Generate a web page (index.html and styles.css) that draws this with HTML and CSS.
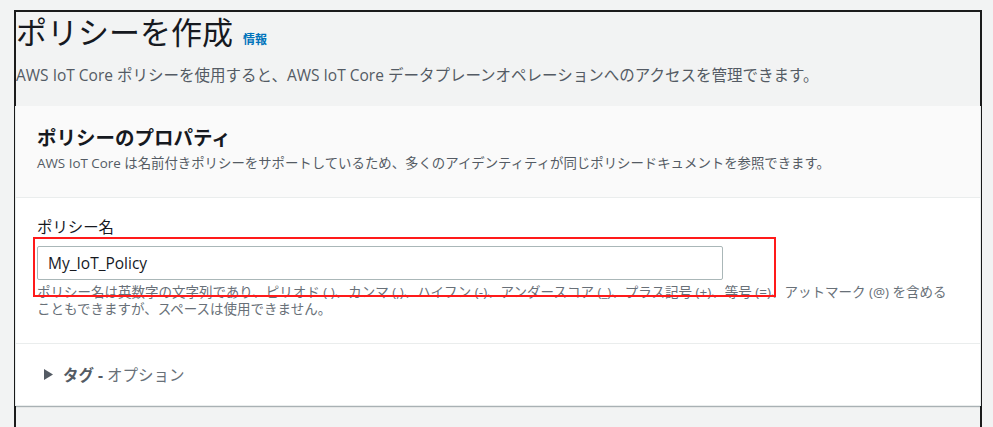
FILE: index.html
```html
<!DOCTYPE html>
<html lang="ja">
<head>
<meta charset="utf-8">
<title>ポリシーを作成</title>
<link rel="stylesheet" href="styles.css">
</head>
<body>
<div class="frame">
  <div class="page-head">
    <h1 class="page-title">ポリシーを作成 <a class="info-link" href="#">情報</a></h1>
    <p class="page-desc">AWS IoT Core ポリシーを使用すると、AWS IoT Core データプレーンオペレーションへのアクセスを管理できます。</p>
  </div>

  <div class="card">
    <div class="card-head">
      <h2 class="card-title">ポリシーのプロパティ</h2>
      <p class="card-desc">AWS IoT Core は名前付きポリシーをサポートしているため、多くのアイデンティティが同じポリシードキュメントを参照できます。</p>
    </div>

    <div class="card-body">
      <div class="field">
        <label class="field-label" for="policyname">ポリシー名</label>
        <input class="field-input" id="policyname" type="text" value="My_IoT_Policy">
        <p class="field-help">ポリシー名は英数字の文字列であり、ピリオド (.)、カンマ (,)、ハイフン (-)、アンダースコア (_)、プラス記号 (+)、等号 (=)、アットマーク (@) を含める<br>こともできますが、スペースは使用できません。</p>
        <div class="highlight"></div>
      </div>
    </div>

    <div class="card-foot">
      <svg class="caret" width="9" height="11" viewBox="0 0 9 11"><polygon points="0,0 9,5.5 0,11" fill="#545b64"/></svg>
      <span class="tag-title">タグ -</span>
      <span class="tag-option">オプション</span>
    </div>
  </div>
</div>
</body>
</html>
```

FILE: styles.css
```css
body
{
	margin:0;
	background-color:#f2f3f3;
	font-family:"Open Sans", "Noto Sans CJK JP", sans-serif;
	color:#16191f;
	overflow:hidden;
}

.frame
{
	margin:10px 11px 0 14px;
	border:2px solid #1b1b1b;
	border-bottom:none;
	height:415px;
	background-color:#f2f3f3;
}

.page-head
{
	height:94px;
}

.page-title
{
	margin:0;
	font-size:31px;
	line-height:40px;
	font-weight:normal;
	color:#16191f;
}

.info-link
{
	font-size:12px;
	font-weight:bold;
	color:#0073bb;
	text-decoration:none;
	margin-left:2px;
}

.page-desc
{
	margin:5px 0 0 0;
	font-size:15.5px;
	line-height:20px;
	color:#545b64;
}

.card
{
	background-color:#ffffff;
	border:1px solid #eaeded;
	border-top:none;
	margin:0 -1px;
	box-shadow:0 1px 1px 0 rgba(0, 28, 36, 0.3);
}

.card-head
{
	background-color:#fafafa;
	padding:19px 21px 25px 21px;
	border-bottom:1px solid #eaeded;
}

.card-title
{
	margin:0;
	font-size:19.5px;
	line-height:26px;
	font-weight:bold;
}

.card-desc
{
	margin:3px 0 0 0;
	font-size:13.4px;
	line-height:18px;
	color:#545b64;
}

.card-body
{
	padding:20px 21px 25px 21px;
	border-bottom:1px solid #eaeded;
}

.field
{
	position:relative;
}

.field-label
{
	display:block;
	font-size:15.4px;
	line-height:20px;
	color:#16191f;
}

.field-input
{
	display:block;
	box-sizing:border-box;
	margin-top:8px;
	width:686px;
	height:34px;
	padding:0 10px;
	border:1px solid #aab7b8;
	border-radius:2px;
	font-family:"Open Sans", "Noto Sans CJK JP", sans-serif;
	font-size:15.5px;
	color:#16191f;
	background-color:#ffffff;
}

.field-help
{
	margin:4px 0 0 0;
	font-size:13.5px;
	line-height:17px;
	color:#687078;
	white-space:nowrap;
}

.highlight
{
	position:absolute;
	left:-4px;
	top:19px;
	width:739px;
	height:56px;
	border:2px solid #ff1a1a;
}

.card-foot
{
	display:flex;
	align-items:center;
	height:61px;
	padding-left:28px;
	font-size:15.5px;
}

.caret
{
	margin-right:10px;
}

.tag-title
{
	font-weight:bold;
	color:#545b64;
	margin-right:4px;
}

.tag-option
{
	color:#687078;
}
```
